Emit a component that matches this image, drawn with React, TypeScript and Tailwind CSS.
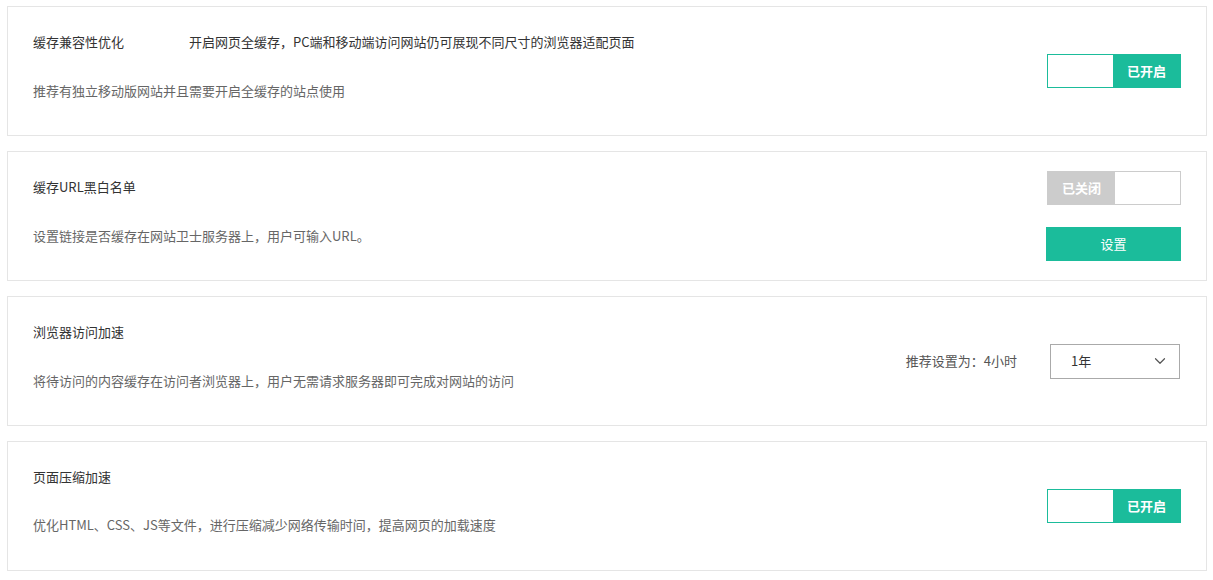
import { ChevronDown } from 'lucide-react';

const FONT = { fontFamily: '"Microsoft YaHei", "Noto Sans CJK SC", "Noto Sans", sans-serif' };

function ToggleOn() {
  return (
    <div className="flex h-[34px] w-[134px] border border-[#1bbc9b]">
      <div className="flex-1 bg-white" />
      <div className="flex w-[67px] items-center justify-center bg-[#1bbc9b] text-[13px] font-bold text-white">
        已开启
      </div>
    </div>
  );
}

function ToggleOff() {
  return (
    <div className="flex h-[34px] w-[134px] border border-[#cccccc]">
      <div className="flex w-[67px] items-center justify-center bg-[#cccccc] text-[13px] font-bold text-white">
        已关闭
      </div>
      <div className="flex-1 bg-white" />
    </div>
  );
}

function Card({ children, right }: { children: React.ReactNode; right: React.ReactNode }) {
  return (
    <div className="flex h-[130px] justify-between border border-[#e5e5e5] bg-white pl-[25px] pr-[25px]">
      <div className="pt-[25px]">{children}</div>
      <div className="flex items-center">{right}</div>
    </div>
  );
}

export default function App() {
  return (
    <div className="min-h-[580px] bg-white px-[7px] pt-[6px] text-[13px]" style={FONT}>
      <div className="flex w-[1200px] flex-col gap-[15px]">
        <Card right={<ToggleOn />}>
          <div className="flex h-5 items-center text-[#333]">
            <span className="w-[156px]">缓存兼容性优化</span>
            <span>开启网页全缓存，PC端和移动端访问网站仍可展现不同尺寸的浏览器适配页面</span>
          </div>
          <div className="mt-[29px] flex h-5 items-center text-[#666]">推荐有独立移动版网站并且需要开启全缓存的站点使用</div>
        </Card>

        <Card
          right={
            <div className="flex flex-col items-end gap-[22px]">
              <ToggleOff />
              <button className="flex h-[34px] w-[135px] items-center justify-center bg-[#1bbc9b] text-[13px] text-white">
                设置
              </button>
            </div>
          }
        >
          <div className="flex h-5 items-center text-[#333]">缓存URL黑白名单</div>
          <div className="mt-[29px] flex h-5 items-center text-[#666]">设置链接是否缓存在网站卫士服务器上，用户可输入URL。</div>
        </Card>

        <Card
          right={
            <div className="flex items-center">
              <span className="mr-[33px] text-[#555]">推荐设置为：4小时</span>
              <div className="mr-px flex h-[35px] w-[130px] items-center justify-between border border-[#aaaaaa] pl-[20px] pr-[10px] text-[#333]">
                <span>1年</span>
                <ChevronDown size={18} strokeWidth={1.6} className="text-[#555]" />
              </div>
            </div>
          }
        >
          <div className="flex h-5 items-center text-[#333]">浏览器访问加速</div>
          <div className="mt-[29px] flex h-5 items-center text-[#666]">将待访问的内容缓存在访问者浏览器上，用户无需请求服务器即可完成对网站的访问</div>
        </Card>

        <Card right={<ToggleOn />}>
          <div className="flex h-5 items-center text-[#333]">页面压缩加速</div>
          <div className="mt-[28px] flex h-5 items-center text-[#666]">优化HTML、CSS、JS等文件，进行压缩减少网络传输时间，提高网页的加载速度</div>
        </Card>
      </div>
    </div>
  );
}
